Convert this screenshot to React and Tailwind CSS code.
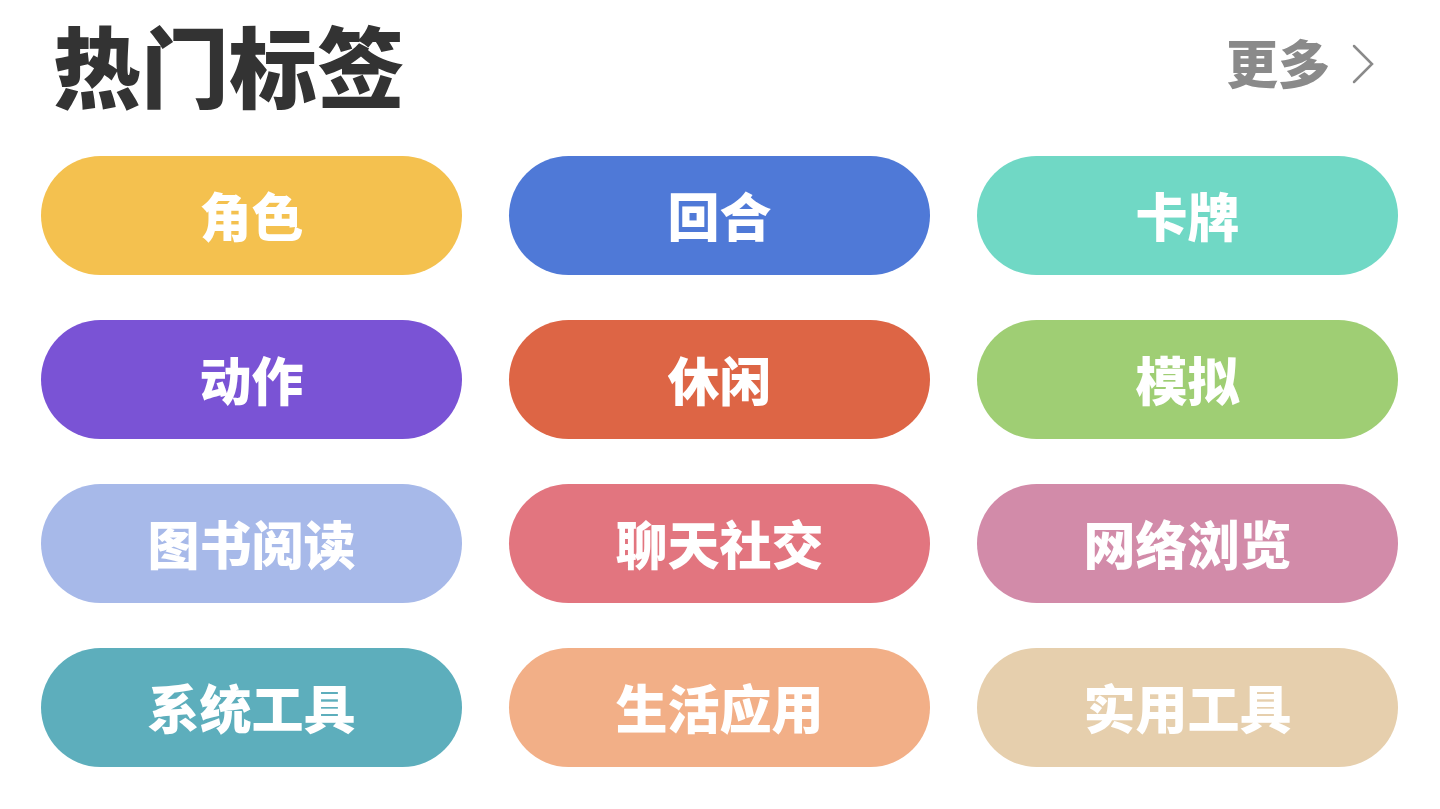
import React from 'react';

const tags = [
  { name: '角色', color: 'bg-[#f4c14f]' },
  { name: '回合', color: 'bg-[#4f79d7]' },
  { name: '卡牌', color: 'bg-[#70d8c5]' },
  { name: '动作', color: 'bg-[#7a53d5]' },
  { name: '休闲', color: 'bg-[#dd6545]' },
  { name: '模拟', color: 'bg-[#9fce74]' },
  { name: '图书阅读', color: 'bg-[#a7b9e9]' },
  { name: '聊天社交', color: 'bg-[#e2757f]' },
  { name: '网络浏览', color: 'bg-[#d28ba9]' },
  { name: '系统工具', color: 'bg-[#5daebc]' },
  { name: '生活应用', color: 'bg-[#f2af87]' },
  { name: '实用工具', color: 'bg-[#e6cfad]' },
];

const TagButton = ({ name, color }) => (
  <button
    type="button"
    className={`${color} h-[119px] pb-0.5 rounded-full text-[52px] leading-[60px] font-black text-white`}
  >
    {name}
  </button>
);

const App = () => {
  return (
    <main className="min-h-screen bg-white pl-[41px] pr-[42px] pb-10 font-['Noto_Sans_CJK_SC',sans-serif]">
      <header className="flex items-center justify-between h-32 pl-3 pr-6 mb-7">
        <h1 className="text-[88px] leading-[128px] pb-0.5 font-black text-[#333333]">热门标签</h1>
        <a href="#tags" className="flex items-center gap-[22px] text-[52px] leading-[60px] font-black text-[#8a8a8a]">
          <span className="pb-1">更多</span>
          <svg className="w-[22px] h-10" viewBox="0 0 22 40" fill="none" stroke="currentColor" strokeWidth="2.5" strokeLinecap="round" aria-hidden="true">
            <path d="M2 2l18 18L2 38" />
          </svg>
        </a>
      </header>

      <section id="tags" className="grid grid-cols-3 gap-x-[47px] gap-y-[45px]">
        {tags.map((tag) => (
          <TagButton key={tag.name} name={tag.name} color={tag.color} />
        ))}
      </section>
    </main>
  );
};

export default App;
